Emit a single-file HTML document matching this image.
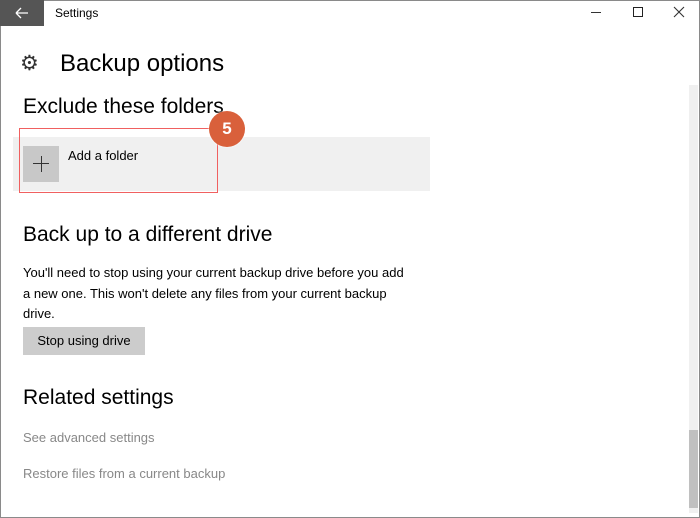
<!DOCTYPE html>
<html><head><style>
body{margin:0;width:700px;height:518px;overflow:hidden;background:#fff;font-family:"Liberation Sans",sans-serif;position:relative;color:#000}
.a{position:absolute;white-space:nowrap}
</style></head><body>
<div class="a" style="left:0;top:0;width:698px;height:516px;border:1px solid #8a8a8a"></div>
<div class="a" style="left:0;top:0;width:44px;height:26px;background:#555"></div>
<svg class="a" style="left:14px;top:6px" width="16" height="14"><path d="M2 7H14M2 7L7 2M2 7L7 12" stroke="#fff" stroke-width="1.3" fill="none"/></svg>
<div class="a" style="left:55px;top:6px;font-size:12px">Settings</div>
<div class="a" style="left:591px;top:12px;width:10px;height:1px;background:#333"></div>
<div class="a" style="left:633px;top:7px;width:8px;height:8px;border:1px solid #222"></div>
<svg class="a" style="left:673px;top:6px" width="12" height="12"><path d="M1 1L11 11M11 1L1 11" stroke="#333" stroke-width="1.1"/></svg>
<div class="a" style="left:689px;top:85px;width:9px;height:428px;background:#f0f0f0"></div>
<div class="a" style="left:689px;top:430px;width:9px;height:78px;background:#c0c0c0"></div>
<div class="a" style="left:20px;top:51px;font-size:21px;color:#333">⚙</div>
<div class="a" style="left:60px;top:50px;font-size:24px">Backup options</div>
<div class="a" style="left:23px;top:95px;font-size:21px">Exclude these folders</div>
<div class="a" style="left:13px;top:137px;width:417px;height:54px;background:#f0f0f0"></div>
<div class="a" style="left:23px;top:146px;width:36px;height:36px;background:#c8c8c8"></div>
<div class="a" style="left:33px;top:163px;width:16px;height:1px;background:#333"></div>
<div class="a" style="left:41px;top:156px;width:1px;height:16px;background:#333"></div>
<div class="a" style="left:68px;top:148px;font-size:13px">Add a folder</div>
<div class="a" style="left:19px;top:128px;width:197px;height:63px;border:1.5px solid #f06060"></div>
<div class="a" style="left:209px;top:111px;width:36px;height:36px;border-radius:50%;background:#d9603b;color:#fff;font-weight:bold;font-size:17px;text-align:center;line-height:36px;box-shadow:0 0 2px #fff">5</div>
<div class="a" style="left:23px;top:223px;font-size:21px">Back up to a different drive</div>
<div class="a" style="left:23px;top:263px;font-size:13px;line-height:20.5px">You'll need to stop using your current backup drive before you add<br>a new one. This won't delete any files from your current backup<br>drive.</div>
<div class="a" style="left:23px;top:327px;width:122px;height:28px;background:#ccc;font-size:13px;line-height:28px;text-align:center">Stop using drive</div>
<div class="a" style="left:23px;top:386px;font-size:21px">Related settings</div>
<div class="a" style="left:23px;top:430px;font-size:13px;color:#888">See advanced settings</div>
<div class="a" style="left:23px;top:466px;font-size:13px;color:#888">Restore files from a current backup</div>
</body></html>
